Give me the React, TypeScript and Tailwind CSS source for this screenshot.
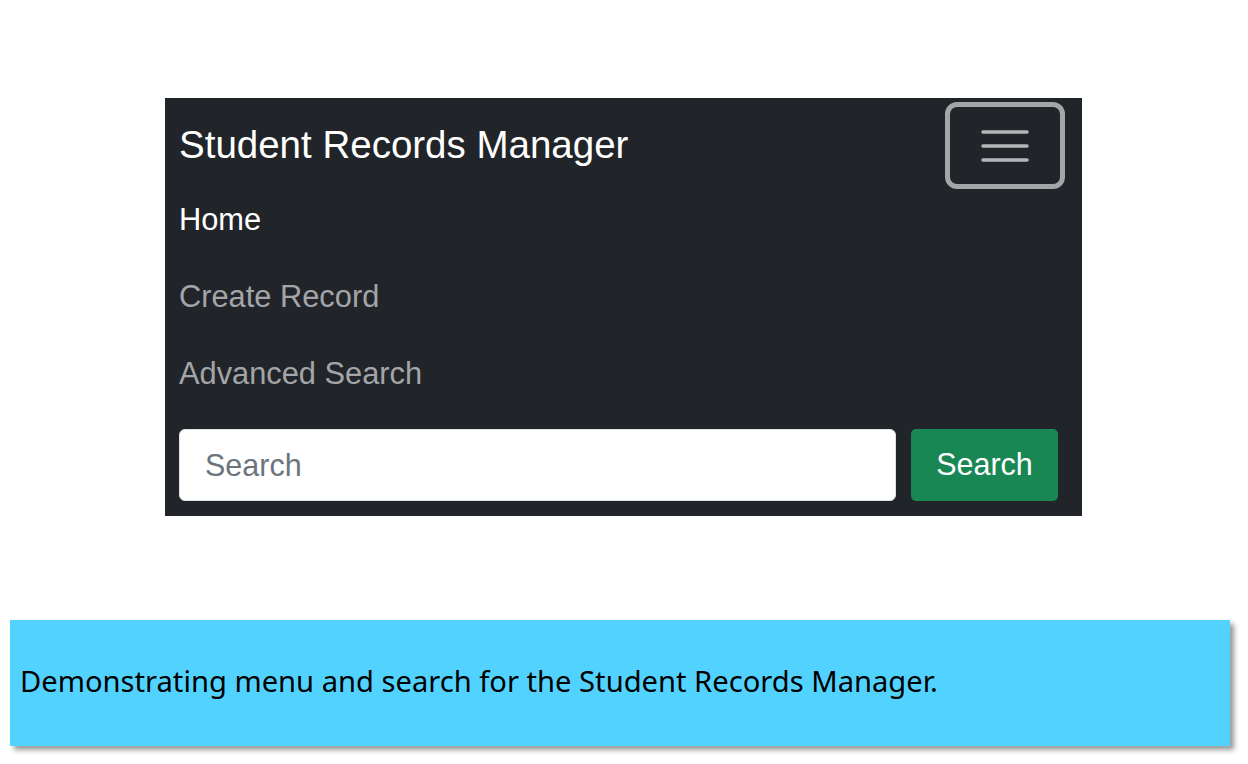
import React from 'react';

function Toggler() {
  return (
    <button className="w-[120px] h-[87px] mt-1 mr-[17px] rounded-[12px] border-[5px] border-[#a3a5a7] flex items-center justify-center">
      <svg width="50" height="36" viewBox="0 0 50 36" fill="none">
        <path d="M3 4h44M3 18h44M3 32h44" stroke="#b4b6b8" strokeWidth="3.5" strokeLinecap="round" />
      </svg>
    </button>
  );
}

export default function App() {
  const links = [
    { label: 'Home', active: true },
    { label: 'Create Record', active: false },
    { label: 'Advanced Search', active: false },
  ];

  return (
    <div className="w-[1248px] h-[764px] bg-white overflow-hidden">
      <nav className="ml-[165px] mt-[98px] w-[917px] h-[418px] bg-[#212529] font-['Liberation_Sans',Arial,sans-serif] flex flex-col">
        <div className="flex items-start justify-between h-[84px] pl-[14px]">
          <span className="text-[38.5px] leading-none text-white mt-[28px]">Student Records Manager</span>
          <Toggler />
        </div>
        <ul className="pl-[14px]">
          {links.map((l) => (
            <li key={l.label} className="h-[77px] flex items-center">
              <a className={'text-[30.8px] ' + (l.active ? 'text-white' : 'text-[#a3a5a8]')}>{l.label}</a>
            </li>
          ))}
        </ul>
        <form className="flex gap-[15px] pl-[14px] pr-[24px] mt-[16px]">
          <input
            placeholder="Search"
            className="flex-1 h-[72px] rounded-[6px] bg-white px-[25px] text-[30.5px] text-[#212529] placeholder:text-[#6c757d] outline-none border border-[#dee2e6]"
          />
          <button type="button" className="w-[147px] h-[72px] rounded-[5px] bg-[#198754] text-white text-[30.5px]">
            Search
          </button>
        </form>
      </nav>
      <div className="ml-[10px] mt-[104px] w-[1220px] h-[126px] bg-[#52d3ff] shadow-[4px_4px_5px_rgba(0,0,0,0.4)] flex items-center pl-[10px]">
        <p className="font-['Noto_Sans',sans-serif] text-[29.15px] text-black -mt-[2px]">
          Demonstrating menu and search for the Student Records Manager.
        </p>
      </div>
    </div>
  );
}
